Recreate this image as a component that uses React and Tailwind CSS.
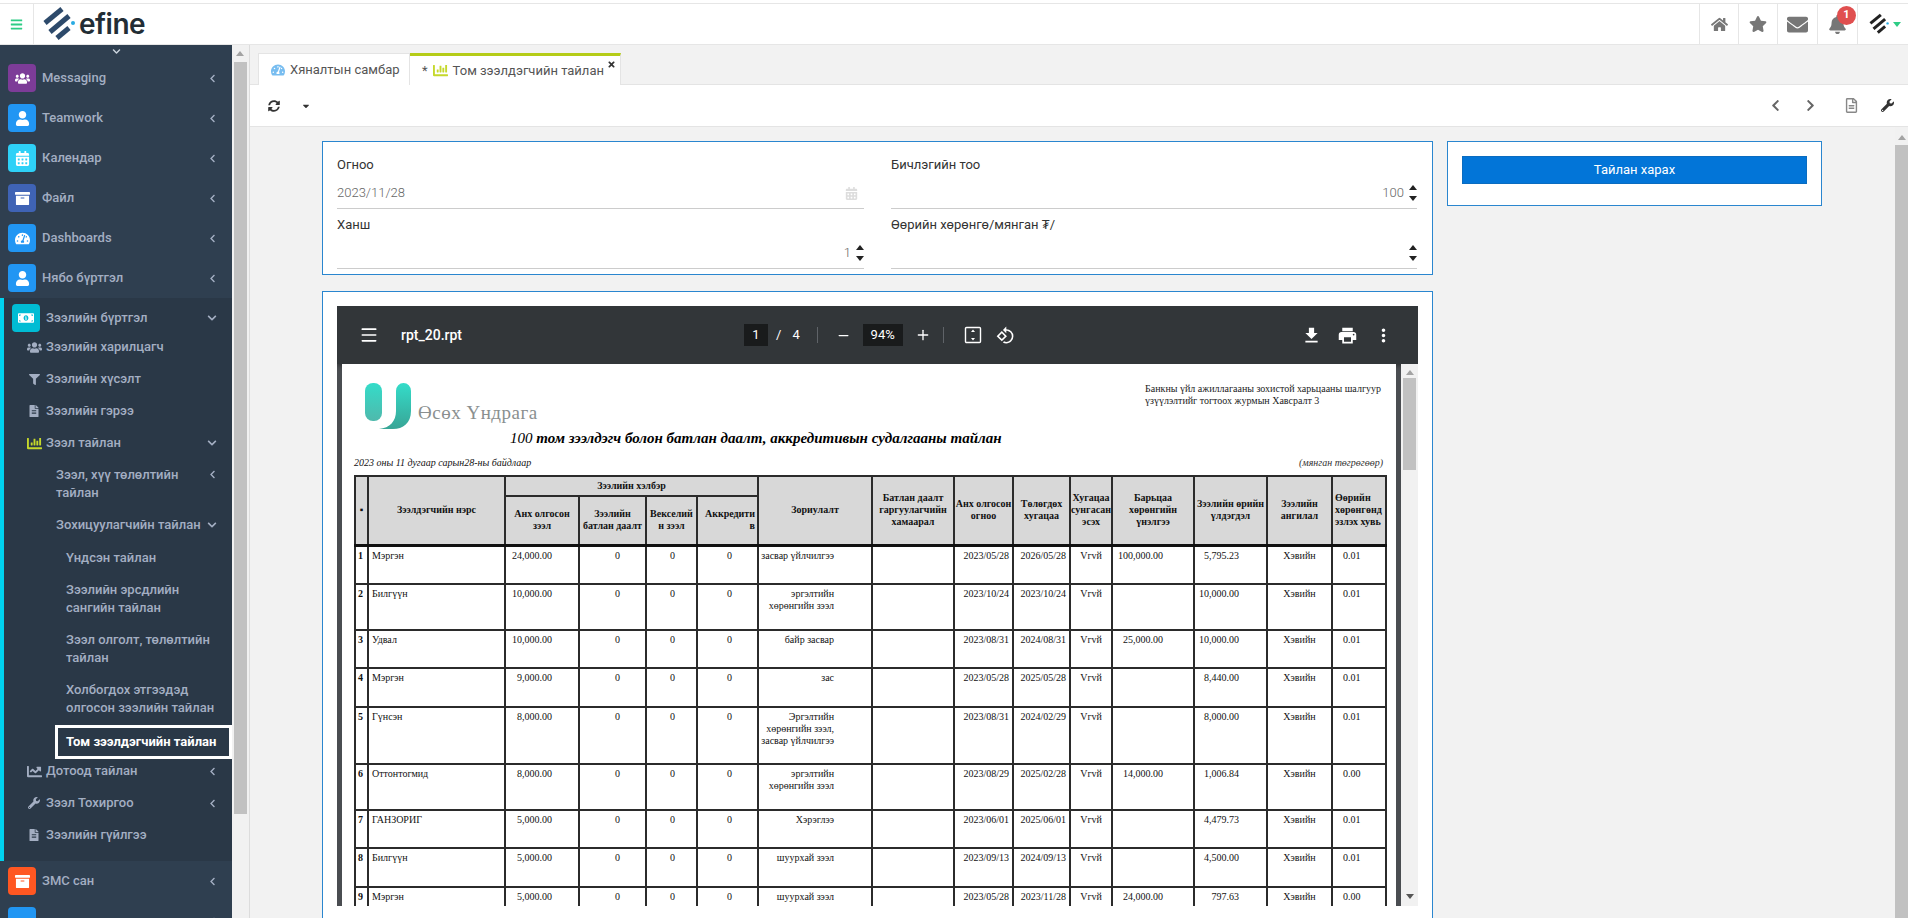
import {
  FaHome, FaStar, FaEnvelope, FaBell, FaChevronLeft, FaChevronRight, FaChevronDown, FaUsers, FaUser,
  FaCalendarAlt, FaArchive, FaTachometerAlt, FaMoneyBillAlt, FaFilter, FaFileAlt, FaChartBar, FaChartLine,
  FaWrench, FaSyncAlt, FaRegFileAlt, FaBars, FaTimes, FaCaretDown,
} from "react-icons/fa";
import { MdFileDownload, MdPrint, MdMoreVert, MdRotate90DegreesCcw } from "react-icons/md";
import { Menu, Minus, Plus } from "lucide-react";

const topMenu = [
  { name: "Messaging", icon: <FaUsers />, color: "bg-[#7d3c98]" },
  { name: "Teamwork", icon: <FaUser />, color: "bg-[#2196f3]" },
  { name: "Календар", icon: <FaCalendarAlt />, color: "bg-[#2ed1f7]" },
  { name: "Файл", icon: <FaArchive />, color: "bg-[#3f63b5]" },
  { name: "Dashboards", icon: <FaTachometerAlt />, color: "bg-[#2196f3]" },
  { name: "Нябо бүртгэл", icon: <FaUser />, color: "bg-[#2196f3]" },
];

const rows = [
  { h: "h-[39px]", n: "Мэргэн", a: "24,000.00", z: ["засвар үйлчилгээ"], d1: "2023/05/28", d2: "2026/05/28", b: "100,000.00", u: "5,795.23", p: "0.01" },
  { h: "h-[46px]", n: "Билгүүн", a: "10,000.00", z: ["эргэлтийн", "хөрөнгийн зээл"], d1: "2023/10/24", d2: "2023/10/24", b: "", u: "10,000.00", p: "0.01" },
  { h: "h-[38px]", n: "Удвал", a: "10,000.00", z: ["байр засвар"], d1: "2023/08/31", d2: "2024/08/31", b: "25,000.00", u: "10,000.00", p: "0.01" },
  { h: "h-[39px]", n: "Мэргэн", a: "9,000.00", z: ["зас"], d1: "2023/05/28", d2: "2025/05/28", b: "", u: "8,440.00", p: "0.01" },
  { h: "h-[57px]", n: "Гүнсэн", a: "8,000.00", z: ["Эргэлтийн", "хөрөнгийн зээл,", "засвар үйлчилгээ"], d1: "2023/08/31", d2: "2024/02/29", b: "", u: "8,000.00", p: "0.01" },
  { h: "h-[46px]", n: "Оттонтогмид", a: "8,000.00", z: ["эргэлтийн", "хөрөнгийн зээл"], d1: "2023/08/29", d2: "2025/02/28", b: "14,000.00", u: "1,006.84", p: "0.00" },
  { h: "h-[38px]", n: "ГАНЗОРИГ", a: "5,000.00", z: ["Хэрэглээ"], d1: "2023/06/01", d2: "2025/06/01", b: "", u: "4,479.73", p: "0.01" },
  { h: "h-[39px]", n: "Билгүүн", a: "5,000.00", z: ["шуурхай зээл"], d1: "2023/09/13", d2: "2024/09/13", b: "", u: "4,500.00", p: "0.01" },
  { h: "h-[39px]", n: "Мэргэн", a: "5,000.00", z: ["шуурхай зээл"], d1: "2023/05/28", d2: "2023/11/28", b: "24,000.00", u: "797.63", p: "0.00" },
];

function TriUp({ className = "border-b-[#222]" }) {
  return <div className={"h-0 w-0 border-x-[4px] border-b-[5px] border-x-transparent " + className} />;
}

function TriDown({ className = "border-t-[#222]" }) {
  return <div className={"h-0 w-0 border-x-[4px] border-t-[5px] border-x-transparent " + className} />;
}

function Spinner() {
  return (
    <div className="ml-[5px] flex flex-col gap-[6px]">
      <TriUp />
      <TriDown />
    </div>
  );
}

function LogoMark({ className, color = "#2d4a6b" }) {
  return (
    <svg viewBox="0 0 32 36" className={className}>
      <g stroke={color} strokeWidth="5" fill="none">
        <path d="M2 17 L19 3" />
        <path d="M7 26 L26 10" />
        <path d="M14 32 L26 22" />
      </g>
      <circle cx="30" cy="17" r="2" fill="#29abe2" />
    </svg>
  );
}

function Header() {
  const cells = [
    { w: "w-[39px]", icon: <FaHome className="text-[17px]" /> },
    { w: "w-[39px]", icon: <FaStar className="text-[18px]" /> },
    { w: "w-[40px]", icon: <FaEnvelope className="text-[21px]" /> },
  ];
  return (
    <header className="h-[45px] shrink-0 bg-white pt-[3px]">
      <div className="flex h-[42px] items-stretch border-y border-[#e6e6e6]">
        <div className="flex w-[34px] items-center justify-center border-r border-[#e6e6e6]">
          <FaBars className="text-[13px] text-[#2ecc85]" />
        </div>
        <div className="flex items-center pl-[9px]">
          <LogoMark className="h-[36px] w-[32px]" />
          <span className="ml-[4px] font-[Inter,sans-serif] text-[28px] leading-none font-semibold tracking-[-0.5px] text-[#222d35]">efine</span>
        </div>
        <div className="flex-1" />
        {cells.map((c, i) => (
          <div key={i} className={c.w + " flex items-center justify-center border-l border-[#e6e6e6] text-[#777]"}>
            {c.icon}
          </div>
        ))}
        <div className="relative flex w-[40px] items-center justify-center border-l border-[#e6e6e6] text-[#777]">
          <FaBell className="text-[19px]" />
          <span className="absolute top-[2px] left-[19px] flex h-[19px] w-[19px] items-center justify-center rounded-full bg-[#e04f4f] text-[11px] font-bold text-white">1</span>
        </div>
        <div className="flex w-[51px] items-center border-l border-[#e6e6e6] pl-[11px]">
          <LogoMark color="#222" className="h-[22px] w-[20px]" />
          <TriDown className="ml-[4px] border-t-[#2ecc85]" />
        </div>
      </div>
    </header>
  );
}

function Sidebar() {
  const textCls = "text-[13px] leading-[18px] font-medium text-[#a3aec2]";
  return (
    <aside className="flex w-[232px] shrink-0 flex-col overflow-hidden bg-[#2f3f50]">
      <div className="flex h-[13px] shrink-0 items-center justify-center text-[#c9d2dc]">
        <FaChevronDown className="text-[9px]" />
      </div>
      {topMenu.map((m) => (
        <TopItem key={m.name} {...m} textCls={textCls} />
      ))}
      <section className="shrink-0 border-l-4 border-[#00d2ef] bg-[#2a3847] pb-[10px]">
        <div className="flex h-[40px] items-center pr-[15px] pl-[8px]">
          <div className="flex h-[28px] w-[28px] items-center justify-center rounded-[4px] bg-[#00bcd4] text-[16px] text-white">
            <FaMoneyBillAlt />
          </div>
          <span className={textCls + " ml-[6px] flex-1"}>Зээлийн бүртгэл</span>
          <FaChevronDown className="text-[10px] text-[#a3aec2]" />
        </div>
        <div className="-mt-[7px]">
          <SubItem icon={<FaUsers className="text-[15px]" />} name="Зээлийн харилцагч" textCls={textCls} />
          <SubItem icon={<FaFilter className="text-[11px]" />} name="Зээлийн хүсэлт" textCls={textCls} />
          <SubItem icon={<FaFileAlt className="text-[12px]" />} name="Зээлийн гэрээ" textCls={textCls} />
          <SubItem icon={<FaChartBar className="text-[15px] text-[#c5d82b]" />} name="Зээл тайлан" textCls={textCls} chevron="down" />
          <div className="flex py-[7px] pr-[15px] pl-[52px]">
            <span className={textCls + " flex-1"}>Зээл, хүү төлөлтийн тайлан</span>
            <FaChevronLeft className="mt-[4px] text-[9px] text-[#a3aec2]" />
          </div>
          <div className="flex h-[32px] items-center pr-[15px] pl-[52px]">
            <span className={textCls + " flex-1 whitespace-nowrap"}>Зохицуулагчийн тайлан</span>
            <FaChevronDown className="-ml-[2px] text-[10px] text-[#a3aec2]" />
          </div>
          <div className={textCls + " mt-[1px] flex h-[32px] items-center pl-[62px]"}>Үндсэн тайлан</div>
          <div className={textCls + " py-[7px] pr-[6px] pl-[62px]"}>Зээлийн эрсдлийн сангийн тайлан</div>
          <div className={textCls + " py-[7px] pr-[6px] pl-[62px]"}>Зээл олголт, төлөлтийн тайлан</div>
          <div className={textCls + " py-[7px] pr-[6px] pl-[62px]"}>Холбогдох этгээдэд олгосон зээлийн тайлан</div>
          <div className="mt-[1px] -mb-[4px] ml-[51px] flex h-[34px] items-center border-[3px] border-white pl-[8px]">
            <span className="text-[13px] font-bold whitespace-nowrap text-white">Том зээлдэгчийн тайлан</span>
          </div>
          <SubItem icon={<FaChartLine className="text-[15px]" />} name="Дотоод тайлан" textCls={textCls} chevron="left" />
          <SubItem icon={<FaWrench className="text-[12px]" />} name="Зээл Тохиргоо" textCls={textCls} chevron="left" />
          <SubItem icon={<FaFileAlt className="text-[12px]" />} name="Зээлийн гүйлгээ" textCls={textCls} />
        </div>
      </section>
      <TopItem name="ЗМС сан" icon={<FaArchive />} color="bg-[#ff5722]" textCls={textCls} />
      <TopItem name="" icon={null} color="bg-[#2196f3]" textCls={textCls} />
    </aside>
  );
}

function TopItem({ name, icon, color, textCls }) {
  return (
    <div className="flex h-[40px] shrink-0 items-center pr-[15px] pl-[8px]">
      <div className={color + " flex h-[28px] w-[28px] items-center justify-center rounded-[4px] text-[15px] text-white"}>{icon}</div>
      <span className={textCls + " ml-[6px] flex-1"}>{name}</span>
      <FaChevronLeft className="text-[9px] text-[#a3aec2]" />
    </div>
  );
}

function SubItem({ icon, name, textCls, chevron }) {
  return (
    <div className="flex h-[32px] items-center pr-[15px] pl-[22px]">
      <div className="flex w-[16px] justify-center text-[#a3aec2]">{icon}</div>
      <span className={textCls + " ml-[4px] flex-1"}>{name}</span>
      {chevron === "down" && <FaChevronDown className="text-[10px] text-[#a3aec2]" />}
      {chevron === "left" && <FaChevronLeft className="text-[9px] text-[#a3aec2]" />}
    </div>
  );
}

function SideScroll() {
  return (
    <div className="flex w-[18px] shrink-0 flex-col items-start border-r border-[#dcdcdc] bg-[#f1f1f1] pl-[2px]">
      <div className="mt-[6px] ml-[2px]">
        <TriUp className="border-b-[#a3a3a3]" />
      </div>
      <div className="mt-[6px] h-[752px] w-[13px] bg-[#c1c1c1]" />
    </div>
  );
}

function Tabs() {
  return (
    <div className="flex h-[40px] shrink-0 items-end border-b border-[#e4e4e4] pl-[8px]">
      <div className="-mb-px flex h-[32px] w-[152px] items-center border border-b-0 border-[#e4e4e4] bg-white pl-[12px] text-[13px] text-[#555]">
        <FaTachometerAlt className="mr-[5px] text-[14px] text-[#78bdf0]" />
        Хяналтын самбар
      </div>
      <div className="relative -mb-px flex h-[32px] w-[211px] items-center border-t-[3px] border-r border-[#b5cc18] border-r-[#e4e4e4] bg-white pl-[12px] text-[13px] text-[#555]">
        <span className="mr-[5px]">*</span>
        <FaChartBar className="mr-[5px] text-[15px] text-[#c5d82b]" />
        Том зээлдэгчийн тайлан
        <FaTimes className="absolute top-[4px] right-[4px] text-[9px] text-[#333]" />
      </div>
    </div>
  );
}

function Toolbar() {
  return (
    <div className="flex h-[42px] shrink-0 items-center border-b border-[#e4e4e4] bg-white pr-[14px] pl-[18px] text-[#666]">
      <FaSyncAlt className="text-[12px] text-[#333]" />
      <FaCaretDown className="ml-[21px] text-[10px] text-[#333]" />
      <div className="flex-1" />
      <FaChevronLeft className="text-[13px]" />
      <FaChevronRight className="ml-[22px] text-[13px]" />
      <FaRegFileAlt className="ml-[27px] text-[15px] text-[#888]" />
      <FaWrench className="ml-[22px] text-[13px] text-[#333]" />
    </div>
  );
}

function Field({ label, children }) {
  return (
    <div>
      <div className="h-[16px] text-[13px] leading-[16px] text-[#333]">{label}</div>
      <div className="mt-[7px] flex h-[29px] items-center justify-end border-b border-[#ccc] pb-[2px] text-[13px] font-light text-[#666]">
        {children}
      </div>
    </div>
  );
}

function FormCard() {
  return (
    <div className="h-[134px] border border-[#2a86cf] bg-white px-[14px] pt-[15px]">
      <div className="grid grid-cols-[527px_526px] gap-x-[27px] gap-y-[8px]">
        <Field label="Огноо">
          <span className="flex-1">2023/11/28</span>
          <FaCalendarAlt className="mr-[6px] text-[13px] text-[#ddd]" />
        </Field>
        <Field label="Бичлэгийн тоо">
          <span>100</span>
          <Spinner />
        </Field>
        <Field label="Ханш">
          <span>1</span>
          <Spinner />
        </Field>
        <Field label="Өөрийн хөрөнгө/мянган ₮/">
          <Spinner />
        </Field>
      </div>
    </div>
  );
}

function PdfToolbar() {
  return (
    <div className="flex h-[58px] shrink-0 items-center bg-[#323639] pr-[24px] text-white shadow-[0_2px_4px_rgba(0,0,0,0.35)]">
      <div className="flex w-[407px] items-center pl-[22px]">
        <Menu size={20} strokeWidth={2} />
        <span className="ml-[22px] text-[14px] font-medium">rpt_20.rpt</span>
      </div>
      <span className="flex h-[22px] w-[24px] items-center justify-center bg-[#191b1c] text-[13px]">1</span>
      <span className="ml-[8px] text-[13px]">/</span>
      <span className="ml-[11px] text-[13px]">4</span>
      <div className="ml-[17px] h-[16px] w-px bg-[#5f6368]" />
      <Minus size={15} className="ml-[18px]" />
      <span className="ml-[12px] flex h-[22px] w-[40px] items-center justify-center bg-[#191b1c] text-[13px]">94%</span>
      <Plus size={16} className="ml-[12px]" />
      <div className="ml-[12px] h-[16px] w-px bg-[#5f6368]" />
      <svg viewBox="0 0 18 18" className="ml-[20px] h-[18px] w-[18px]" fill="none" stroke="white" strokeWidth="1.4">
        <rect x="1.5" y="1.5" width="15" height="15" rx="1" />
        <path d="M9 3.5 L11 6 H7 Z M9 14.5 L7 12 H11 Z" fill="white" stroke="none" />
      </svg>
      <MdRotate90DegreesCcw className="ml-[14px] text-[19px]" />
      <div className="flex-1" />
      <MdFileDownload className="text-[21px]" />
      <MdPrint className="ml-[15px] text-[21px]" />
      <MdMoreVert className="ml-[15px] text-[21px]" />
    </div>
  );
}

function TealLogo() {
  return (
    <svg viewBox="0 0 46 46" className="h-[46px] w-[46px]">
      <defs>
        <linearGradient id="tealA" x1="0" y1="0" x2="0" y2="1">
          <stop offset="0" stopColor="#34dcc9" />
          <stop offset="1" stopColor="#4fb9ac" />
        </linearGradient>
        <linearGradient id="tealB" x1="0" y1="0" x2="0" y2="1">
          <stop offset="0" stopColor="#34dcc9" />
          <stop offset="1" stopColor="#38a596" />
        </linearGradient>
      </defs>
      <rect x="0" y="0" width="17" height="38" rx="8" fill="url(#tealA)" />
      <path d="M31 8 a7.5 8 0 0 1 15 0 V28 C46 40 38 46 28 46 H14 C25 45 31 38 31 28 Z" fill="url(#tealB)" />
    </svg>
  );
}

const th = "border-2 border-[#2b2b2b] bg-[#d8d8d8] px-[2px] text-center align-middle font-bold";
const td = "border-2 border-[#2b2b2b] pt-[3px] align-top";

function ReportTable() {
  return (
    <table className="w-[1031px] table-fixed border-collapse text-[10px] leading-[12px] text-[#111]">
      <colgroup>
        {["w-[13px]", "w-[137px]", "w-[74px]", "w-[67px]", "w-[51px]", "w-[61px]", "w-[114px]", "w-[82px]", "w-[59px]", "w-[57px]", "w-[42px]", "w-[82px]", "w-[73px]", "w-[65px]", "w-[54px]"].map((w, i) => (
          <col key={i} className={w} />
        ))}
      </colgroup>
      <thead>
        <tr className="h-[20px]">
          <th rowSpan={2} className={th}>▪</th>
          <th rowSpan={2} className={th}>Зээлдэгчийн нэрс</th>
          <th colSpan={4} className={th}>Зээлийн хэлбэр</th>
          <th rowSpan={2} className={th}>Зориулалт</th>
          <th rowSpan={2} className={th}>Батлан даалт гаргуулагчийн хамаарал</th>
          <th rowSpan={2} className={th + " !px-0"}>Анх олгосон огноо</th>
          <th rowSpan={2} className={th}>Төлөгдөх хугацаа</th>
          <th rowSpan={2} className={th + " !px-0"}>Хугацаа сунгасан эсэх</th>
          <th rowSpan={2} className={th}>Барьцаа хөрөнгийн үнэлгээ</th>
          <th rowSpan={2} className={th}>Зээлийн өрийн үлдэгдэл</th>
          <th rowSpan={2} className={th}>Зээлийн ангилал</th>
          <th rowSpan={2} className={th + " !text-left"}>Өөрийн хөрөнгөнд эзлэх хувь</th>
        </tr>
        <tr className="h-[49px] border-b-[3px] border-[#111]">
          <th className={th}>Анх олгосон зээл</th>
          <th className={th}>Зээлийн батлан даалт</th>
          <th className={th}>Векселий<br />н зээл</th>
          <th className={th + " !text-right"}>Аккредити<br />в</th>
        </tr>
      </thead>
      <tbody>
        {rows.map((r, i) => (
          <tr key={i} className={r.h}>
            <td className={td + " pl-[2px] font-bold"}>{i + 1}</td>
            <td className={td + " pl-[3px]"}>{r.n}</td>
            <td className={td + " pr-[26px] text-right"}>{r.a}</td>
            <td className={td + " pr-[25px] text-right"}>0</td>
            <td className={td + " pr-[21px] text-right"}>0</td>
            <td className={td + " pr-[25px] text-right"}>0</td>
            <td className={td + " pr-[37px] text-right"}>
              {r.z.map((l) => (
                <div key={l}>{l}</div>
              ))}
            </td>
            <td className={td} />
            <td className={td + " pr-[3px] text-right"}>{r.d1}</td>
            <td className={td + " pr-[3px] text-right"}>{r.d2}</td>
            <td className={td + " text-center"}>Vгvй</td>
            <td className={td + " pr-[30px] text-right"}>{r.b}</td>
            <td className={td + " pr-[27px] text-right"}>{r.u}</td>
            <td className={td + " text-center"}>Хэвийн</td>
            <td className={td + " pl-[10px]"}>{r.p}</td>
          </tr>
        ))}
      </tbody>
    </table>
  );
}

function PdfPage() {
  return (
    <div className="w-[1054px] shrink-0 overflow-hidden bg-white pt-[19px] pr-[13px] pl-[12px] font-['Liberation_Serif',serif] text-[#111]">
      <div className="flex h-[46px] justify-between">
        <div className="ml-[11px] flex items-end">
          <TealLogo />
          <span className="mb-[5px] ml-[7px] text-[19px] leading-[22px] tracking-[0.5px] text-[#8a8f8f]">Өсөх Үндрага</span>
        </div>
        <div className="w-[238px] text-[10px] leading-[12px] text-[#222]">
          Банкны үйл ажиллагааны зохистой харьцааны шалгуур үзүүлэлтийг тогтоох журмын Хавсралт 3
        </div>
      </div>
      <div className="ml-[156px] h-[18px] text-[15px] leading-[18px] font-bold whitespace-nowrap text-black italic">
        <span className="font-normal">100</span> том зээлдэгч болон батлан даалт, аккредитивын судалгааны тайлан
      </div>
      <div className="mt-[10px] flex h-[12px] justify-between text-[10px] leading-[12px] italic">
        <span>2023 оны 11 дугаар сарын28-ны байдлаар</span>
        <span className="text-[#333]">(мянган төгрөгөөр)</span>
      </div>
      <div className="mt-[6px]">
        <ReportTable />
      </div>
    </div>
  );
}

function PdfViewer() {
  return (
    <div className="flex h-[600px] w-[1081px] flex-col overflow-hidden bg-[#4a4d51]">
      <PdfToolbar />
      <div className="flex min-h-0 flex-1 pl-[5px]">
        <PdfPage />
        <div className="ml-[5px] flex w-[17px] flex-col items-center bg-[#f1f1f1]">
          <div className="mt-[6px]">
            <TriUp className="border-b-[#a3a3a3]" />
          </div>
          <div className="mt-[3px] h-[92px] w-[13px] bg-[#c1c1c1]" />
          <div className="flex-1" />
          <div className="mb-[7px]">
            <TriDown className="border-t-[#555]" />
          </div>
        </div>
      </div>
    </div>
  );
}

export default function App() {
  return (
    <div className="flex h-[918px] w-[1908px] flex-col overflow-hidden bg-white font-[Roboto,sans-serif]">
      <Header />
      <div className="flex min-h-0 flex-1">
        <Sidebar />
        <SideScroll />
        <main className="flex min-w-0 flex-1 flex-col bg-[#f2f2f2]">
          <Tabs />
          <Toolbar />
          <div className="flex min-h-0 flex-1">
            <div className="flex flex-1 items-start gap-[14px] overflow-hidden pt-[14px] pl-[72px]">
              <div className="w-[1111px] shrink-0">
                <FormCard />
                <div className="mt-[16px] h-[640px] border border-[#2a86cf] bg-white px-[14px] pt-[14px]">
                  <PdfViewer />
                </div>
              </div>
              <div className="h-[65px] w-[375px] shrink-0 border border-[#2a86cf] bg-white px-[14px] pt-[14px]">
                <div className="flex h-[28px] items-center justify-center border border-[#0a6cc0] bg-[#0275d8] text-[13px] text-white">Тайлан харах</div>
              </div>
            </div>
            <div className="flex w-[13px] shrink-0 flex-col items-center bg-[#f1f1f1]">
              <div className="mt-[8px]">
                <TriUp className="border-b-[#a3a3a3]" />
              </div>
              <div className="mt-[5px] w-full flex-1 bg-[#c1c1c1]" />
            </div>
          </div>
        </main>
      </div>
    </div>
  );
}
